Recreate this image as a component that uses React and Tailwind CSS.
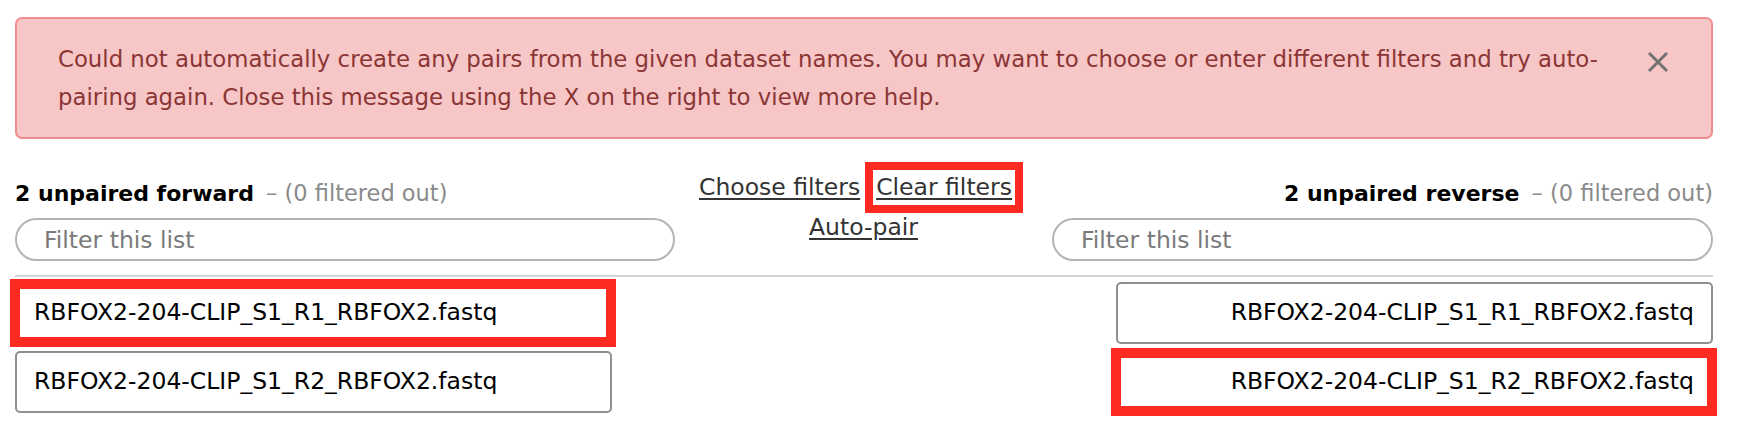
import React from 'react';

const forward = ['RBFOX2-204-CLIP_S1_R1_RBFOX2.fastq', 'RBFOX2-204-CLIP_S1_R2_RBFOX2.fastq'];
const reverse = ['RBFOX2-204-CLIP_S1_R1_RBFOX2.fastq', 'RBFOX2-204-CLIP_S1_R2_RBFOX2.fastq'];

const ListHeader = ({ count, label, align }) => (
  <div className={`leading-[30px] whitespace-nowrap ${align === 'right' ? 'text-right' : ''}`}>
    <span className="text-[22px] font-bold text-black">{count} unpaired {label}</span>
    <span className="pl-[5px] text-[22.5px] text-[#8a8a8a]"> – (0 filtered out)</span>
  </div>
);

const FilterInput = () => (
  <input
    placeholder="Filter this list"
    className="mt-[7px] w-full h-[43px] rounded-full border-2 border-[#b4b4b4] bg-white px-[27px] text-[23.5px] text-black placeholder:text-[#7a7a7a] outline-none"
  />
);

// red annotation frame drawn over the element
const marker =
  "after:content-[''] after:absolute after:-left-[7px] after:-right-[6px] after:-top-[5px] after:-bottom-[5px] after:border-[10px] after:border-[#fc2a20] after:pointer-events-none";

const Dataset = ({ name, align, marked }) => (
  <div
    className={`relative h-[62px] w-[597px] flex items-center rounded-[5px] border-2 border-[#8f8f8f] bg-white px-[17px] text-[23.5px] text-black whitespace-nowrap ${
      align === 'right' ? 'justify-end' : ''
    } ${marked ? marker : ''}`}
  >
    {name}
  </div>
);

export default function App() {
  return (
    <div className="w-[1742px] h-[434px] bg-white overflow-hidden font-['DejaVu_Sans',sans-serif]">
      <div className="w-[1713px] pl-[15px] pt-[17px]">
        {/* Alert */}
        <div className="h-[122px] flex items-start rounded-[7px] border-2 border-[#f08d8d] bg-[#f7c6c7]">
          <p className="w-[1610px] pl-[41px] pt-[21px] text-[22.8px] leading-[38px] text-[#8b3535]">
            Could not automatically create any pairs from the given dataset names. You may want to choose or enter different filters and try auto-pairing again. Close this message using the X on the right to view more help.
          </p>
          <button className="mt-[32px] ml-[20px] w-[22px] h-[22px] text-[#737373]">
            <svg viewBox="0 0 22 22" className="w-[22px] h-[22px]" fill="none" stroke="currentColor" strokeWidth="3">
              <path d="M2 2L20 20M20 2L2 20" />
            </svg>
          </button>
        </div>

        {/* Headers, filters, links */}
        <div className="mt-[34px] flex items-start">
          <div className="w-[660px] pt-[5px]">
            <ListHeader count={2} label="forward" />
            <FilterInput />
          </div>
          <div className="flex-1 flex flex-col items-center text-[23.5px] text-[#333] leading-[29px]">
            <div className="flex gap-[16px] pr-[16px]">
              <a className="underline underline-offset-[3px] cursor-pointer">Choose filters</a>
              <a className="inline-block underline underline-offset-[3px] cursor-pointer outline-[8px] outline-solid outline-[#fc2a20] outline-offset-[3px]">Clear filters</a>
            </div>
            <a className="mt-[11px] underline underline-offset-[3px] cursor-pointer">Auto-pair</a>
          </div>
          <div className="w-[661px] pt-[5px]">
            <ListHeader count={2} label="reverse" align="right" />
            <FilterInput />
          </div>
        </div>

        <div className="mt-[14px] h-[2px] bg-[#d3d3d3]" />

        {/* Unpaired lists */}
        <div className="mt-[5px] flex justify-between">
          <div className="flex flex-col gap-[7px]">
            {forward.map((n, i) => (
              <Dataset key={n} name={n} marked={i === 0} />
            ))}
          </div>
          <div className="flex flex-col gap-[7px]">
            {reverse.map((n, i) => (
              <Dataset key={n} name={n} align="right" marked={i === 1} />
            ))}
          </div>
        </div>
      </div>
    </div>
  );
}
